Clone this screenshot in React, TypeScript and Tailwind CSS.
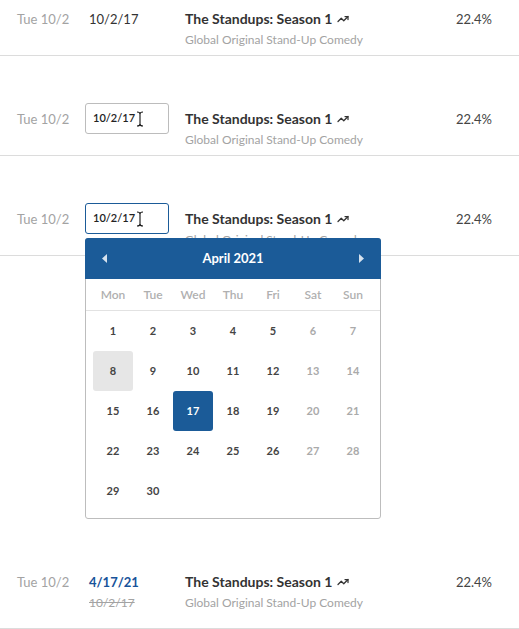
import { TrendingUp } from 'lucide-react';

const BLUE = '#1b5b98';

type Cell = { d: number | null; muted?: boolean };

const weeks: Cell[][] = [
  [1, 2, 3, 4, 5, 6, 7],
  [8, 9, 10, 11, 12, 13, 14],
  [15, 16, 17, 18, 19, 20, 21],
  [22, 23, 24, 25, 26, 27, 28],
  [29, 30, null, null, null, null, null],
].map((w) => w.map((d, i) => ({ d, muted: i >= 5 })));

function Cursor() {
  return (
    <svg width="8" height="16" viewBox="0 0 8 16" className="absolute left-[50px] top-[7px]">
      <path d="M1 1 Q4 1 4 3 L4 13 Q4 15 1 15 M7 1 Q4 1 4 3 M4 13 Q4 15 7 15" fill="none" stroke="#fff" strokeWidth="2.4" />
      <path d="M1 1 Q4 1 4 3 L4 13 Q4 15 1 15 M7 1 Q4 1 4 3 M4 13 Q4 15 7 15" fill="none" stroke="#111" strokeWidth="1.1" />
    </svg>
  );
}

function Title() {
  return (
    <div className="flex-1">
      <div className="flex items-center gap-[5px] text-[14px] leading-[18px] font-bold text-[#333]">
        The Standups: Season 1
        <TrendingUp className="h-[12px] w-[12px]" strokeWidth={2.5} />
      </div>
      <div className="mt-[3px] text-[12px] leading-[18px] text-[#a3a3a3]">Global Original Stand-Up Comedy</div>
    </div>
  );
}

function Calendar() {
  return (
    <div className="absolute left-0 top-[28px] z-10 w-[296px] rounded-[3px] border border-[#bdbdbd] bg-white pb-[7px]">
      <div
        className="-mx-px -mt-px flex h-[41px] items-center justify-between rounded-t-[3px] px-[17px] text-[13px] font-bold text-white"
        style={{ backgroundColor: BLUE }}
      >
        <svg width="5" height="9" viewBox="0 0 5 9"><path d="M5 0 L0 4.5 L5 9 Z" fill="#d6e2ee" /></svg>
        <span>April 2021</span>
        <svg width="5" height="9" viewBox="0 0 5 9"><path d="M0 0 L5 4.5 L0 9 Z" fill="#d6e2ee" /></svg>
      </div>
      <div className="grid h-[32px] grid-cols-7 items-center border-b border-[#e2e2e2] px-[7px] text-[12px] font-semibold text-[#b0b0b0]">
        {['Mon', 'Tue', 'Wed', 'Thu', 'Fri', 'Sat', 'Sun'].map((n) => (
          <div key={n} className="text-center">{n}</div>
        ))}
      </div>
      <div className="grid grid-cols-7 px-[7px]">
        {weeks.flat().map((c, i) => (
          <div
            key={i}
            className={
              'flex h-[40px] items-center justify-center rounded-[3px] text-[11px] font-bold ' +
              (c.d === 17
                ? 'text-white'
                : c.d === 8
                ? 'bg-[#e6e6e6] text-[#444]'
                : c.muted
                ? 'text-[#aaaaaa]'
                : 'text-[#444]')
            }
            style={c.d === 17 ? { backgroundColor: BLUE } : undefined}
          >
            {c.d}
          </div>
        ))}
      </div>
    </div>
  );
}

function Row({ children, pt, pb = 'pb-[6px]' }: { children: React.ReactNode; pt: string; pb?: string }) {
  return (
    <div className={`flex items-start border-b border-[#dcdcdc] pl-[17px] pr-[27px] ${pt} ${pb}`}>
      <div className="w-[68px] text-[13px] leading-[18px] text-[#a3a3a3]">Tue 10/2</div>
      {children}
      <div className="text-[13px] leading-[18px] text-[#444]">22.4%</div>
    </div>
  );
}

export default function App() {
  return (
    <div className="h-[629px] w-[519px] overflow-hidden bg-white" style={{ fontFamily: 'Lato, "Noto Sans", sans-serif' }}>
      <Row pt="pt-[10px]">
        <div className="w-[100px] pl-[4px] text-[13px] leading-[18px] text-[#333]">10/2/17</div>
        <Title />
      </Row>
      <Row pt="pt-[54px]">
        <div className="w-[100px]">
          <div className="relative -mt-[7px] flex h-[31px] w-[84px] items-center rounded-[3px] border border-[#bcbcbc] pl-[7px] text-[11px] font-semibold text-[#222]">
            10/2/17
            <Cursor />
          </div>
        </div>
        <Title />
      </Row>
      <Row pt="pt-[54px]">
        <div className="relative w-[100px]">
          <div className="relative -mt-[7px] flex h-[31px] w-[84px] items-center rounded-[3px] border pl-[7px] text-[11px] font-semibold text-[#222]" style={{ borderColor: BLUE }}>
            10/2/17
            <Cursor />
          </div>
          <Calendar />
        </div>
        <Title />
      </Row>
      <Row pt="pt-[317px]" pb="pb-[16px]">
        <div className="w-[100px] pl-[4px]">
          <div className="text-[13px] leading-[18px] font-bold" style={{ color: '#17539a' }}>4/17/21</div>
          <div className="mt-[3px] text-[12px] leading-[18px] text-[#a3a3a3] line-through">10/2/17</div>
        </div>
        <Title />
      </Row>
    </div>
  );
}
